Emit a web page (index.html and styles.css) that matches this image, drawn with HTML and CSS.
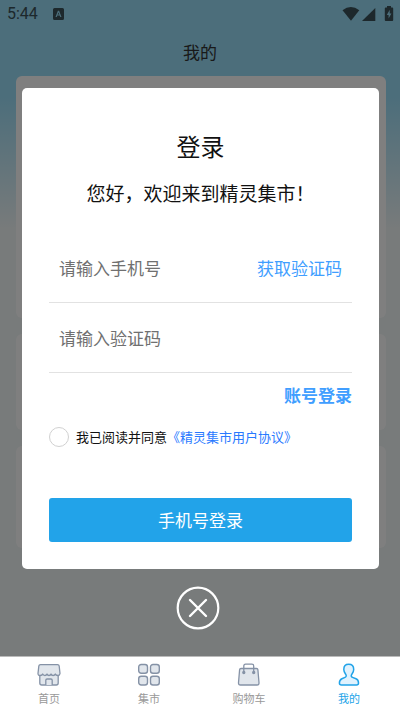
FILE: index.html
```html
<!DOCTYPE html>
<html lang="zh-CN">
<head>
<meta charset="utf-8">
<meta name="viewport" content="width=device-width, initial-scale=1">
<title>我的</title>
<link rel="stylesheet" href="styles.css">
</head>
<body>
<main class="screen">
  <header class="status">
    <span class="status-time">5:44</span>
    <svg class="status-app" viewBox="0 0 11 12" aria-hidden="true"><path fill="currentColor" fill-rule="evenodd" d="M1.500 0h8A1.500 1.500 0 0 1 11 1.500v9A1.500 1.500 0 0 1 9.500 12h-8A1.500 1.500 0 0 1 0 10.500v-9A1.500 1.500 0 0 1 1.500 0zM4.900 2.800 2.500 9h1.300l.5-1.400h2.400L7.200 9h1.300L6.100 2.800zm.6 1.600.8 2.200H4.700z"/></svg>
    <svg class="status-signals" viewBox="0 0 52 16" aria-hidden="true">
      <g fill="currentColor">
        <path d="M.5 4.200Q8.800-2.200 17.300 4.200L9 14.800z"/>
        <path d="M33.300 2v13H20z"/>
        <path fill-rule="evenodd" d="M45 0h4v1.500h1.300q.9 0 .9.900v11.700q0 .9-.9.900h-6.600q-.9 0-.9-.9V2.400q0-.9.900-.9H45zM47.700 3.800 44.800 9H46.600v3.600L49.400 7.500H47.700z"/>
      </g>
    </svg>
  </header>
  <h1 class="page-title">我的</h1>
  <div class="cards">
    <section class="card card-profile"></section>
    <section class="card card-orders"></section>
    <section class="card card-tools"></section>
  </div>

  <div class="overlay">
    <form class="dialog" role="dialog" aria-labelledby="login-title">
      <h2 class="dialog-title" id="login-title">登录</h2>
      <p class="dialog-greeting">您好，欢迎来到精灵集市！</p>
      <div class="field">
        <input class="field-input" type="tel" placeholder="请输入手机号" aria-label="手机号">
        <button class="field-action" type="button">获取验证码</button>
      </div>
      <div class="field">
        <input class="field-input" type="text" placeholder="请输入验证码" aria-label="验证码">
      </div>
      <a class="switch-login" href="#">账号登录</a>
      <div class="agreement">
        <input class="agreement-check" type="checkbox" id="agree">
        <label for="agree">我已阅读并同意</label><a class="agreement-link" href="#">《精灵集市用户协议》</a>
      </div>
      <button class="submit" type="submit">手机号登录</button>
    </form>
    <button class="close" type="button" aria-label="关闭">
      <svg viewBox="0 0 44 44" fill="none" stroke="#fff" stroke-linecap="round"><circle cx="22" cy="22" r="20.300" stroke-width="2.200"/><path stroke-width="2.400" d="m14 14 16 16M30 14 14 30"/></svg>
    </button>
  </div>
</main>

<nav class="tabs">
  <a class="tab" href="#">
    <svg viewBox="0 0 24 24" fill="#e1e6ec" stroke="#8592a6" stroke-width="1.300" stroke-linejoin="round"><path d="M2.800 11.500V20q0 2 2 2h14.400q2 0 2-2v-8.500z"/><path d="M3.500 1.700h17q1.500 0 1.700 1.500l.8 7.300q-.2 2-2 2-2 0-2.700-1.500-.8 1.500-2.200 1.500T14 11q-.8 1.500-2 1.500T10 11q-.8 1.500-2.100 1.500T5.700 11Q5 12.500 3 12.500t-2-2l.8-7.300q.2-1.500 1.700-1.500z"/><path d="M8.800 22v-4.700q0-1.300 1.300-1.300h3.800q1.300 0 1.300 1.300V22"/></svg>
    <span>首页</span>
  </a>
  <a class="tab" href="#">
    <svg viewBox="0 0 24 24" fill="#e1e6ec" stroke="#8592a6" stroke-width="1.400"><rect x="1.700" y="1.500" width="8.800" height="8.800" rx="2.500"/><rect x="13.500" y="1.500" width="8.800" height="8.800" rx="2.500"/><rect x="1.700" y="13.200" width="8.800" height="8.800" rx="2.500"/><rect x="13.500" y="13.200" width="8.800" height="8.800" rx="2.500"/></svg>
    <span>集市</span>
  </a>
  <a class="tab" href="#">
    <svg viewBox="0 0 24 24" fill="#e1e6ec" stroke="#8592a6" stroke-width="1.300" stroke-linejoin="round"><path d="M4 5.500h15.500q1.300 0 1.400 1.300l1.100 13q.1 2.200-2 2.200H3.500q-2.100 0-2-2.200l1.100-13q.1-1.300 1.400-1.300z"/><path fill="none" stroke-linecap="round" d="M6.800 9.500V3q0-1.800 1.800-1.800h6.300q1.800 0 1.800 1.800v6.500"/><circle cx="6.800" cy="9.500" r="1" fill="#8592a6"/><circle cx="16.700" cy="9.500" r="1" fill="#8592a6"/></svg>
    <span>购物车</span>
  </a>
  <a class="tab tab-active" href="#" aria-current="page">
    <svg viewBox="0 0 24 24" fill="#e0f2fe" stroke="#21a3e8" stroke-width="1.500" stroke-linejoin="round"><path d="M11.700 1.200c3.100 0 5 2.200 5 5.200 0 2.400-1.200 3.700-2 5-.8 1.400-.5 2.500.8 3l3.500 1.400c2 .8 2.500 2.600 2.500 4.300q0 2-2 2H4.400q-2 0-2-2c0-1.700.8-3.500 2.500-4.300L8 14.400c1.300-.6 1.600-1.700.8-3-.8-1.300-2-2.600-2-5 0-3 1.800-5.200 4.900-5.200z"/></svg>
    <span>我的</span>
  </a>
</nav>
</body>
</html>
```
FILE: styles.css
```css
* {
  box-sizing: border-box;
}

body {
  margin: 0;
  min-height: 100vh;
  display: flex;
  flex-direction: column;
  font-family: "Noto Sans CJK SC", sans-serif;
  color: #111;
}

h1,
h2,
p {
  margin: 0;
  font-weight: 400;
}

button {
  border: 0;
  padding: 0;
  background: none;
  font: inherit;
  cursor: pointer;
}

a {
  text-decoration: none;
}

svg {
  display: block;
}

.screen {
  position: relative;
  flex: 1;
  background: #f0f6f6 linear-gradient(#98dcf6 0, #98dcf6 96px, #f0f6f6 228px) no-repeat;
}

.status {
  display: flex;
  align-items: center;
  height: 28px;
  padding: 0 6px 0 7px;
  color: #3a5158;
}

.status-time {
  font: 16px/28px Roboto, sans-serif;
}

.status-app {
  width: 11px;
  height: 12px;
  margin-left: 15px;
}

.status-signals {
  width: 52px;
  height: 16px;
  margin-left: auto;
}

.page-title {
  padding: 8px 0;
  font-size: 17px;
  line-height: 32px;
  text-align: center;
  color: #333;
}

.cards {
  display: flex;
  flex-direction: column;
  gap: 16px;
  padding: 0 14px 0 16px;
}

.card {
  background: #fff;
  border-radius: 6px;
}

.card-profile {
  height: 242px;
}

.card-orders {
  height: 96px;
}

.card-tools {
  height: 102px;
}

.overlay {
  position: absolute;
  inset: 0;
  display: flex;
  flex-direction: column;
  align-items: center;
  gap: 17px;
  padding: 88px 21px 0 22px;
  background: rgba(0, 0, 0, 0.5);
}

.dialog {
  display: flex;
  flex-direction: column;
  width: 100%;
  padding: 40px 27px 27px;
  background: #fff;
  border-radius: 5px;
}

.dialog-title {
  font-size: 24px;
  line-height: 36px;
  text-align: center;
}

.dialog-greeting {
  margin: 14px 0 25px;
  font-size: 19px;
  line-height: 30px;
  text-align: center;
}

.field {
  display: flex;
  align-items: center;
  height: 70px;
  padding: 0 10px;
  border-bottom: 1px solid #e2e2e2;
}

.field-input {
  flex: 1;
  min-width: 0;
  padding: 0;
  border: 0;
  outline: 0;
  font: inherit;
  font-size: 17px;
}

.field-input::placeholder {
  color: #707070;
  opacity: 1;
}

.field-action {
  font-size: 17px;
  color: #409eff;
}

.switch-login {
  align-self: flex-end;
  margin-top: 8px;
  font-size: 17px;
  font-weight: 700;
  line-height: 28px;
  color: #409eff;
}

.agreement {
  display: flex;
  align-items: center;
  margin: 17px 0 50px;
  font-size: 13px;
  line-height: 22px;
}

.agreement-check {
  appearance: none;
  width: 20px;
  height: 20px;
  margin: 0 7px 0 0;
  border: 1px solid #d1d1d1;
  border-radius: 50%;
}

.agreement-check:checked {
  background: #22a3e9;
}

.agreement-link {
  color: #2979ff;
}

.submit {
  height: 44px;
  padding-bottom: 2px;
  border-radius: 3px;
  background: #22a3e9;
  font-size: 17px;
  color: #fff;
}

.close {
  width: 44px;
  height: 44px;
  margin-right: 6px;
}

.tabs {
  display: flex;
  height: 56px;
  background: #fff;
  border-top: 1px solid #bbb;
}

.tab {
  flex: 1;
  display: flex;
  flex-direction: column;
  align-items: center;
  gap: 3px;
  padding: 6px 2px 0 0;
  font-size: 11px;
  line-height: 16px;
  color: #999;
}

.tab svg {
  width: 24px;
  height: 24px;
}

.tab-active {
  color: #21a3e8;
}
```
